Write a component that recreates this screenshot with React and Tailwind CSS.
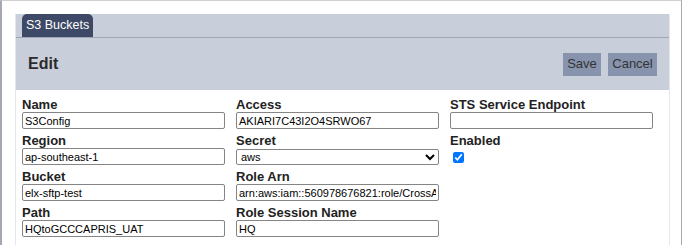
import React from 'react';

const Field = ({ label, value, children }) => (
  <div className="flex flex-col">
    <label className="mt-1 text-[13px] leading-[15px] font-bold text-[#222]">{label}</label>
    {children || (
      <input
        type="text"
        defaultValue={value}
        className="h-[17px] w-full rounded-[2px] border border-[#858585] bg-white px-[2px] text-[11px] text-black outline-none"
      />
    )}
  </div>
);

const App = () => {
  return (
    <div className="h-[245px] w-[684px] overflow-hidden bg-white font-['Liberation_Sans',Arial,sans-serif]">
      <div className="h-[245px] w-[682px] border-t border-l-2 border-r border-t-[#cfcfcf] border-l-[#a4a9b1] border-r-[#a9a9a9] pl-[13px] pt-[13px]">
        <div className="h-[240px] w-[655px] border-r border-l border-[#e3e7ed]">
          {/* tab strip */}
          <div className="flex h-[24px] border-b border-[#9ea6b5] bg-[#c8cfdb] pl-[6px]">
            <div className="flex h-[23px] items-center rounded-t-[5px] bg-[#3d4966] px-[4px] text-[12.5px] text-white">
              S3 Buckets
            </div>
          </div>

          {/* header */}
          <div className="flex h-[52px] items-center justify-between bg-[#c8cfdb] pl-[12px] pr-[12px]">
            <h1 className="text-[16px] font-bold text-[#2b2b2b]">Edit</h1>
            <div className="flex gap-[7px]">
              <button className="h-[23px] w-[38px] bg-[#8893ae] text-[13px] text-[#333]">Save</button>
              <button className="h-[23px] w-[49px] bg-[#8893ae] text-[13px] text-[#333]">Cancel</button>
            </div>
          </div>

          {/* form */}
          <div className="grid grid-cols-[203px_203px_203px] gap-x-[11px] pl-[6px] pt-[3px]">
            <div className="flex flex-col">
              <Field label="Name" value="S3Config" />
              <Field label="Region" value="ap-southeast-1" />
              <Field label="Bucket" value="elx-sftp-test" />
              <Field label="Path" value="HQtoGCCCAPRIS_UAT" />
            </div>
            <div className="flex flex-col">
              <Field label="Access" value="AKIARI7C43I2O4SRWO67" />
              <Field label="Secret">
                <select
                  defaultValue="aws"
                  className="mt-[1px] h-[16px] w-full rounded-[2px] border border-[#858585] bg-white text-[11px] text-black outline-none"
                >
                  <option value="aws">aws</option>
                </select>
              </Field>
              <Field label="Role Arn" value="arn:aws:iam::560978676821:role/CrossAccountS3Access" />
              <Field label="Role Session Name" value="HQ" />
            </div>
            <div className="flex flex-col">
              <Field label="STS Service Endpoint" value="" />
              <Field label="Enabled">
                <div className="pl-[3px] pt-[4px]">
                  <input type="checkbox" defaultChecked className="m-0 block h-[11px] w-[11px]" />
                </div>
              </Field>
            </div>
          </div>
        </div>
      </div>
    </div>
  );
};

export default App;
